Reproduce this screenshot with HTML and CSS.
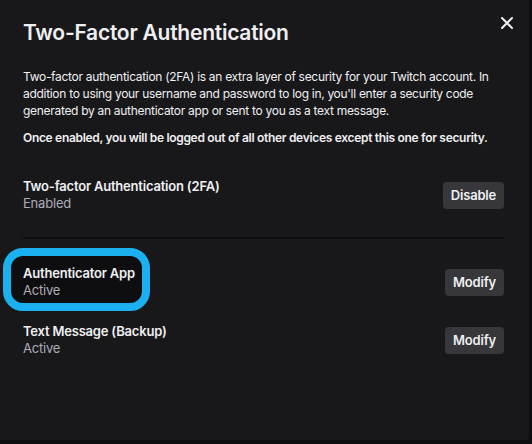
FILE: index.html
```html
<!DOCTYPE html>
<html lang="en">
<head>
    <meta charset="utf-8" />
    <title>Two-Factor Authentication</title>
    <link rel="stylesheet" href="styles.css">
</head>
<body>
    <div class="modal">
        <button class="close" aria-label="Close">
            <svg width="12" height="12" viewBox="0 0 12 12">
                <path d="M1 1 L11 11 M11 1 L1 11" stroke="#efeff1" stroke-width="2" stroke-linecap="round" />
            </svg>
        </button>

        <h1 class="title">Two-Factor Authentication</h1>

        <p class="intro">
            Two-factor authentication (2FA) is an extra layer of security for your Twitch account. In
            addition to using your username and password to log in, you'll enter a security code
            generated by an authenticator app or sent to you as a text message.
        </p>
        <p class="warning">Once enabled, you will be logged out of all other devices except this one for security.</p>

        <div class="row row-main">
            <div class="info">
                <div class="label">Two-factor Authentication (2FA)</div>
                <div class="state">Enabled</div>
            </div>
            <button class="button">Disable</button>
        </div>

        <div class="divider"></div>

        <div class="row">
            <div class="info highlight">
                <div class="label">Authenticator App</div>
                <div class="state">Active</div>
            </div>
            <button class="button">Modify</button>
        </div>

        <div class="row row-last">
            <div class="info">
                <div class="label">Text Message (Backup)</div>
                <div class="state">Active</div>
            </div>
            <button class="button">Modify</button>
        </div>
    </div>
</body>
</html>
```

FILE: styles.css
```css
body {
    margin: 0;
    background: #0e0e10;
    font-family: Inter, "Noto Sans", sans-serif;
    color: #efeff1;
}
.modal {
    position: relative;
    box-sizing: border-box;
    width: 529px;
    height: 440px;
    background: #18181b;
    border-radius: 0 0 4px 0;
    padding: 20px 25px 0 23px;
}
.close {
    position: absolute;
    top: 11px;
    right: 10px;
    width: 24px;
    height: 24px;
    padding: 0;
    border: none;
    background: none;
    display: flex;
    align-items: center;
    justify-content: center;
    cursor: pointer;
}
.title {
    margin: 0;
    font-size: 21px;
    line-height: 26px;
    font-weight: 600;
    letter-spacing: -0.25px;
}
.intro {
    margin: 22px 0 0;
    font-size: 12px;
    line-height: 17px;
    letter-spacing: -0.3px;
}
.warning {
    margin: 10px 0 0;
    font-size: 12px;
    line-height: 17px;
    font-weight: 600;
    letter-spacing: -0.31px;
}
.row {
    display: flex;
    align-items: center;
    justify-content: space-between;
    margin-top: 26px;
}
.row-main {
    margin-top: 32px;
}
.row-last {
    margin-top: 24px;
}
.label {
    font-size: 13px;
    line-height: 17px;
    font-weight: 600;
    letter-spacing: -0.2px;
}
.state {
    font-size: 13px;
    line-height: 17px;
    color: #adadb8;
    letter-spacing: -0.2px;
}
.highlight {
    box-sizing: border-box;
    width: 147px;
    margin: -17px 0 -12px -20px;
    padding: 9px 0 4px 12px;
    border: 8px solid #1bb1f0;
    border-radius: 20px;
    background: #0e0e10;
}
.divider {
    height: 2px;
    background: #0e0e10;
    margin-top: 25px;
}
.button {
    height: 27px;
    padding: 0 8px;
    border: none;
    border-radius: 4px;
    background: #36363b;
    color: #efeff1;
    font-family: Inter, "Noto Sans", sans-serif;
    font-size: 13px;
    font-weight: 600;
    letter-spacing: -0.2px;
    cursor: pointer;
}
```
